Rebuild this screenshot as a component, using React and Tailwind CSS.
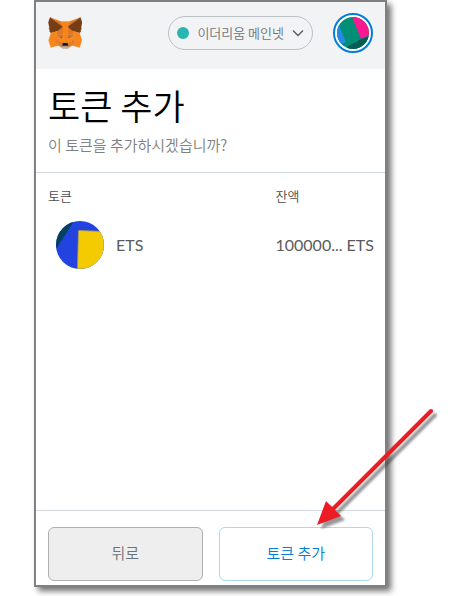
const foxShapes = [
  ["#e2761b", "274.1,35.5 174.6,109.4 193,65.8"],
  ["#e4761b", "44.4,35.5 143.1,110.1 125.6,65.8"],
  ["#f6851b", "238.3,206.8 211.8,247.4 268.5,263 284.8,207.7"],
  ["#f6851b", "33.9,207.7 50.1,263 106.8,247.4 80.3,206.8"],
  ["#e4761b", "103.6,138.2 87.8,162.1 144.1,164.6 142.1,104.1"],
  ["#e4761b", "214.9,138.2 175.9,103.4 174.6,164.6 230.8,162.1"],
  ["#e4761b", "106.8,247.4 140.6,230.9 111.4,208.1"],
  ["#e4761b", "177.9,230.9 211.8,247.4 207.1,208.1"],
  ["#e4761b", "211.8,247.4 177.9,230.9 180.6,253 180.3,262.3"],
  ["#e4761b", "106.8,247.4 138.3,262.3 138.1,253 140.6,230.9"],
  ["#763d16", "138.8,193.5 110.6,185.2 130.5,176.1"],
  ["#763d16", "179.7,193.5 188,176.1 208,185.2"],
  ["#e4761b", "106.8,247.4 111.6,206.8 80.3,207.7"],
  ["#e4761b", "207,206.8 211.8,247.4 238.3,207.7"],
  ["#e2701a", "230.8,162.1 174.6,164.6 179.8,193.5 188.1,176.1 208.1,185.2"],
  ["#e2701a", "110.6,185.2 130.6,176.1 138.8,193.5 144.1,164.6 87.8,162.1"],
  ["#e4751f", "87.8,162.1 111.4,208.1 110.6,185.2"],
  ["#e4751f", "208.1,185.2 207.1,208.1 230.8,162.1"],
  ["#e4751f", "144.1,164.6 138.8,193.5 145.4,227.6 146.9,182.7"],
  ["#e4751f", "174.6,164.6 171.9,182.6 173.1,227.6 179.8,193.5"],
  ["#f6851b", "179.8,193.5 173.1,227.6 177.9,230.9 207.1,208.1 208.1,185.2"],
  ["#f6851b", "110.6,185.2 111.4,208.1 140.6,230.9 145.4,227.6 138.8,193.5"],
  ["#c0ad9e", "180.3,262.3 180.6,253 178.1,250.8 140.4,250.8 138.1,253 138.3,262.3 106.8,247.4 117.8,256.4 140.1,271.9 178.4,271.9 200.8,256.4 211.8,247.4"],
  ["#161616", "177.9,230.9 173.1,227.6 145.4,227.6 140.6,230.9 138.1,253 140.4,250.8 178.1,250.8 180.6,253"],
  ["#763d16", "278.3,114.2 286.8,73.4 274.1,35.5 177.9,106.9 214.9,138.2 267.2,153.5 278.8,140 273.8,136.4 281.8,129.1 275.6,124.3 283.6,118.2"],
  ["#763d16", "31.8,73.4 40.3,114.2 34.9,118.2 42.9,124.3 36.8,129.1 44.8,136.4 39.8,140 51.3,153.5 103.6,138.2 140.6,106.9 44.4,35.5"],
  ["#f6851b", "267.2,153.5 214.9,138.2 230.8,162.1 207.1,208.1 238.3,207.7 284.8,207.7"],
  ["#f6851b", "103.6,138.2 51.3,153.5 33.9,207.7 80.3,207.7 111.4,208.1 87.8,162.1"],
  ["#f6851b", "174.6,164.6 177.9,106.9 193.1,65.8 125.6,65.8 140.6,106.9 144.1,164.6 145.3,182.8 145.4,227.6 173.1,227.6 173.3,182.8"],
];

function FoxLogo() {
  return (
    <svg viewBox="29 34 257 239" className="h-8 w-[34px]" role="img" aria-label="MetaMask">
      {foxShapes.map(([fill, points], i) => (
        <polygon key={i} fill={fill} stroke={fill} strokeWidth="2" strokeLinejoin="round" points={points} />
      ))}
    </svg>
  );
}

function AccountIcon() {
  return (
    <svg viewBox="0 0 32 32" className="size-8 rounded-full" aria-hidden="true">
      <rect width="32" height="32" fill="#018e77" />
      <path d="M0 9 L2 8 L9 25 L0 29Z" fill="#248be1" />
      <path d="M15 0 H32 V18 L24 22Z" fill="#fb1891" />
      <path d="M10 30 L24 22 L32 19 V32 H10Z" fill="#045e56" />
    </svg>
  );
}

function TokenIcon() {
  return (
    <svg viewBox="0 0 48 48" className="size-12 rounded-full" aria-hidden="true">
      <rect width="48" height="48" fill="#2343e0" />
      <path d="M0 0 H18 L0 28Z" fill="#03415d" />
      <path d="M22.500 9.500 L48 10.500 V48 H21.500Z" fill="#f3cb00" stroke="#a99a50" strokeWidth="0.8" />
    </svg>
  );
}

function Header() {
  return (
    <header className="flex items-center bg-[#f2f3f4] px-3 pt-[11px] pb-4">
      <FoxLogo />
      <button
        type="button"
        className="ml-auto flex h-[34px] items-center rounded-full border border-[#bbc0c5] px-2 text-[13px] text-[#6a737d]"
      >
        <span className="size-3 rounded-full bg-[#29b6af]" />
        <span className="mx-2">이더리움 메인넷</span>
        <svg viewBox="0 0 12 8" className="h-2 w-3" fill="none" stroke="#535a61" strokeWidth="1.300" aria-hidden="true">
          <path d="M1 1.500 L6 6.500 L11 1.500" />
        </svg>
      </button>
      <button
        type="button"
        aria-label="계정"
        className="ml-5 grid size-10 place-items-center rounded-full border-2 border-[#037dd6] bg-white"
      >
        <AccountIcon />
      </button>
    </header>
  );
}

function TokenTable() {
  return (
    <table className="w-full table-fixed text-left text-[#4d4d4d]">
      <thead className="text-[13px] leading-5">
        <tr>
          <th className="w-[70%] font-[350]">토큰</th>
          <th className="font-[350]">잔액</th>
        </tr>
      </thead>
      <tbody className="font-['Lato','Noto_Sans_CJK_KR',sans-serif] text-base font-normal text-[#5b5b5b]">
        <tr>
          <td className="pt-[15px] pl-2">
            <div className="flex items-center gap-3">
              <TokenIcon />
              ETS
            </div>
          </td>
          <td className="pt-[15px] whitespace-nowrap">100000... ETS</td>
        </tr>
      </tbody>
    </table>
  );
}

function Arrow() {
  return (
    <svg
      viewBox="0 0 130 130"
      className="pointer-events-none absolute top-[401px] -right-[59px] size-[130px]"
      aria-hidden="true"
    >
      <defs>
        <filter id="soft" x="-10%" y="-10%" width="120%" height="120%">
          <feGaussianBlur stdDeviation="1.200" />
        </filter>
      </defs>
      <g transform="translate(4 4)" filter="url(#soft)" opacity="0.5" fill="#333" stroke="#333">
        <path d="M117 8 L20 105" strokeWidth="4" strokeLinecap="round" />
        <path d="M3 122 L12 98 L27 113Z" stroke="none" />
      </g>
      <path d="M117 8 L20 105" stroke="#ed1c24" strokeWidth="4" strokeLinecap="round" />
      <path d="M3 122 L12 98 L27 113Z" fill="#ed1c24" />
    </svg>
  );
}

export default function App() {
  return (
    <div className="min-h-screen bg-white pr-[68px] pb-[9px] pl-[34px] font-['Noto_Sans_CJK_KR',sans-serif] font-[350]">
      <div className="relative border-2 border-[#808080] bg-white shadow-[4px_4px_6px_#707070]">
        <Header />
        <main>
          <section className="border-b border-[#d2d8dd] px-3 pt-4 pb-[15px]">
            <h1 className="text-[35px] leading-10 font-[350] text-black">토큰 추가</h1>
            <p className="mt-2 text-[15px] leading-6 text-[#808080]">이 토큰을 추가하시겠습니까?</p>
          </section>
          <section className="min-h-[337px] px-3 pt-[13px]">
            <TokenTable />
          </section>
        </main>
        <footer className="grid grid-cols-2 gap-4 border-t border-[#d2d8dd] px-3 pt-4 pb-1 text-[15px]">
          <button type="button" className="h-[54px] rounded-md border border-[#b0b0b0] bg-[#eeeeee] pb-0.5 text-[#6a737d]">
            뒤로
          </button>
          <button type="button" className="h-[54px] rounded-md border border-[#b0d7f0] bg-white pb-0.5 text-[#037dd6]">
            토큰 추가
          </button>
        </footer>
        <Arrow />
      </div>
    </div>
  );
}
